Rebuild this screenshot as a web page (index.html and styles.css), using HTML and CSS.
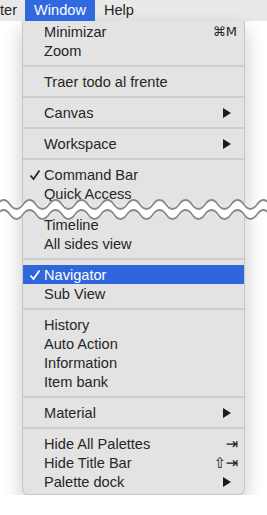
FILE: index.html
```html
<!DOCTYPE html>
<html lang="en">
<head>
  <meta charset="UTF-8" />
  <title>Window menu</title>
  <link rel="stylesheet" href="styles.css">
</head>
<body>
  <div class="menubar">
    <span class="bar-item first">ter</span>
    <span class="bar-item active">Window</span>
    <span class="bar-item">Help</span>
  </div>
  <div class="menu">
    <div class="item"><span class="label">Minimizar</span><span class="key">⌘M</span></div>
    <div class="item"><span class="label">Zoom</span></div>
    <div class="sep"></div>
    <div class="item"><span class="label">Traer todo al frente</span></div>
    <div class="sep"></div>
    <div class="item"><span class="label">Canvas</span><svg class="arrow" viewBox="0 0 8 10"><polygon points="0,0 8,5 0,10" /></svg></div>
    <div class="sep"></div>
    <div class="item"><span class="label">Workspace</span><svg class="arrow" viewBox="0 0 8 10"><polygon points="0,0 8,5 0,10" /></svg></div>
    <div class="sep"></div>
    <div class="item"><svg class="check" viewBox="0 0 12 12"><path d="M1.5 6.5 L4.5 10 L10.5 1.5" /></svg><span class="label">Command Bar</span></div>
    <div class="item"><span class="label">Quick Access</span></div>
    <div class="gap"></div>
    <div class="item"><span class="label">Timeline</span></div>
    <div class="item"><span class="label">All sides view</span></div>
    <div class="sep"></div>
    <div class="item selected"><svg class="check" viewBox="0 0 12 12"><path d="M1.5 6.5 L4.5 10 L10.5 1.5" /></svg><span class="label">Navigator</span></div>
    <div class="item"><span class="label">Sub View</span></div>
    <div class="sep"></div>
    <div class="item"><span class="label">History</span></div>
    <div class="item"><span class="label">Auto Action</span></div>
    <div class="item"><span class="label">Information</span></div>
    <div class="item"><span class="label">Item bank</span></div>
    <div class="sep"></div>
    <div class="item"><span class="label">Material</span><svg class="arrow" viewBox="0 0 8 10"><polygon points="0,0 8,5 0,10" /></svg></div>
    <div class="sep"></div>
    <div class="item"><span class="label">Hide All Palettes</span><span class="key sym">⇥</span></div>
    <div class="item"><span class="label">Hide Title Bar</span><span class="key sym">⇧⇥</span></div>
    <div class="item"><span class="label">Palette dock</span><svg class="arrow" viewBox="0 0 8 10"><polygon points="0,0 8,5 0,10" /></svg></div>
  </div>
  <!-- torn edge drawn over the menu -->
  <svg class="wave" viewBox="0 0 267 24" width="267" height="24">
    <path class="band" d="M-3 11.5 q6.5 -9 13 0 t13 0 t13 0 t13 0 t13 0 t13 0 t13 0 t13 0 t13 0 t13 0 t13 0 t13 0 t13 0 t13 0 t13 0 t13 0 t13 0 t13 0 t13 0 t13 0 t13 0 t13 0" />
    <path class="line" d="M-3 6.5 q6.5 -9 13 0 t13 0 t13 0 t13 0 t13 0 t13 0 t13 0 t13 0 t13 0 t13 0 t13 0 t13 0 t13 0 t13 0 t13 0 t13 0 t13 0 t13 0 t13 0 t13 0 t13 0 t13 0" />
    <path class="line" d="M-3 16.5 q6.5 -9 13 0 t13 0 t13 0 t13 0 t13 0 t13 0 t13 0 t13 0 t13 0 t13 0 t13 0 t13 0 t13 0 t13 0 t13 0 t13 0 t13 0 t13 0 t13 0 t13 0 t13 0 t13 0" />
  </svg>
</body>
</html>
```

FILE: styles.css
```css
body {
  margin: 0;
  font-family: 'Liberation Sans', Arial, sans-serif;
  font-size: 14.6px;
  background-color: #fff;
  color: #262626;
  position: relative;
  overflow: hidden;
}
.menubar {
  display: flex;
  height: 21px;
  background-color: #e9e9e9;
  line-height: 21px;
}
.bar-item {
  padding: 0 9px;
}
.first {
  padding: 0 8px 0 0;
}
.active {
  background-color: #3069de;
  color: #fff;
}
.menu {
  margin-left: 22px;
  width: 221px;
  background-color: #e3e3e3;
  border: 1px solid #c7c7c7;
  border-top: none;
  border-radius: 0 0 6px 6px;
  padding: 1px 0 3px;
  box-shadow: 0 8px 20px rgba(0, 0, 0, 0.22);
}
.item {
  position: relative;
  display: flex;
  align-items: center;
  height: 19px;
  padding: 0 12px 0 21px;
}
.item .label {
  flex: 1;
}
.check {
  position: absolute;
  left: 6px;
  top: 4px;
  width: 12px;
  height: 12px;
  fill: none;
  stroke: currentColor;
  stroke-width: 1.8;
}
.key {
  font-family: 'DejaVu Sans', sans-serif;
  font-size: 13px;
  margin-right: -5px;
}
.key.sym {
  font-size: 15px;
  letter-spacing: -1px;
}
.arrow {
  width: 8px;
  height: 10px;
  margin-right: 1px;
  fill: #1c1c1c;
}
.selected {
  background-color: #2f66db;
  color: #fff;
}
.sep {
  height: 12px;
  display: flex;
  align-items: center;
}
.sep::before {
  content: "";
  flex: 1;
  height: 2px;
  background-color: #cdcdcd;
}
.gap {
  height: 12px;
}
.wave {
  position: absolute;
  left: 0;
  top: 198px;
}
.wave path {
  fill: none;
}
.wave .band {
  stroke: #fff;
  stroke-width: 10;
}
.wave .line {
  stroke: #8a8a8a;
  stroke-width: 1.8;
}
```
